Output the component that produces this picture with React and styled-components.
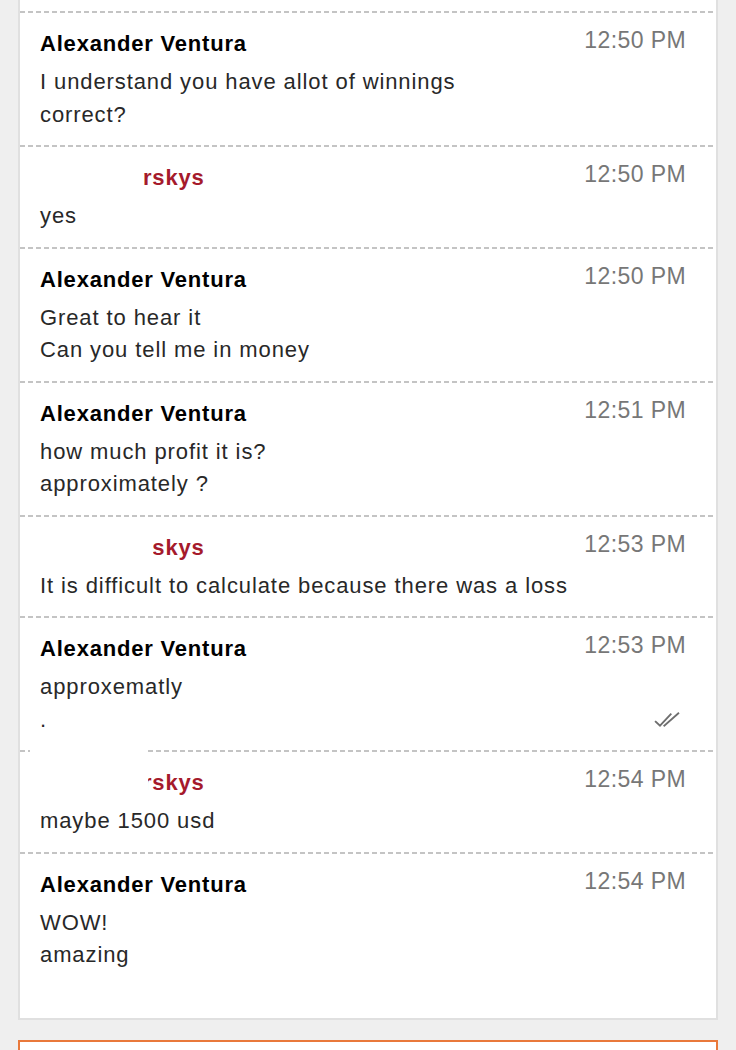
import styled, { createGlobalStyle } from "styled-components";

const GlobalStyle = createGlobalStyle`
  body {
    margin: 0;
    background: #efefef;
    font-family: "Liberation Sans", Arial, Helvetica, sans-serif;
  }
`;

const messages = [
  { from: "me", time: "12:50 PM", lines: ["I understand you have allot of winnings", "correct?"] },
  { from: "them", time: "12:50 PM", lines: ["yes"] },
  { from: "me", time: "12:50 PM", lines: ["Great to hear it", "Can you tell me in money"] },
  { from: "me", time: "12:51 PM", lines: ["how much profit it is?", "approximately ?"] },
  { from: "them", time: "12:53 PM", lines: ["It is difficult to calculate because there was a loss"], cover: "name" },
  { from: "me", time: "12:53 PM", lines: ["approxematly", "."], read: true },
  { from: "them", time: "12:54 PM", lines: ["maybe 1500 usd"], cover: "edge" },
  { from: "me", time: "12:54 PM", lines: ["WOW!", "amazing"] },
];

const Ticks = () => (
  <TickIcon width="26" height="16" viewBox="0 0 26 16" fill="none">
    <path d="M1.7 10.7 L6 14.7 L16.7 3.3" />
    <path d="M10.3 14.7 L24.3 2.3" />
  </TickIcon>
);

const App = () => {
  return (
    <>
      <GlobalStyle />
      <Panel>
        {messages.map((m, i) => (
          <Row key={i} $last={i === messages.length - 1}>
            {m.cover && <Redaction $kind={m.cover} />}
            <Head>
              {m.from === "me" ? (
                <Name>Alexander Ventura</Name>
              ) : (
                <Name $other>rskys</Name>
              )}
              <Time>{m.time}</Time>
            </Head>
            <BodyRow>
              <Body>
                {m.lines.map((l, j) => (
                  <Line key={j}>{l}</Line>
                ))}
              </Body>
              {m.read && <Ticks />}
            </BodyRow>
          </Row>
        ))}
      </Panel>
      <Composer />
    </>
  );
};

const Panel = styled.div`
  margin: 0 18px;
  padding-top: 11px;
  background: #fff;
  border: 2px solid #e0e0e0;
  border-top: none;
`;
const Row = styled.div`
  position: relative;
  padding: 17px 30px ${(p) => (p.$last ? "46px" : "14px")} 20px;
  background: repeating-linear-gradient(
      to right,
      #c4c4c4 0 5px,
      transparent 5px 8px
    )
    top left / 100% 2px no-repeat;
`;
// white boxes that hide part of the other person's name
const Redaction = styled.div`
  position: absolute;
  left: 10px;
  background: #fff;
  top: ${(p) => (p.$kind === "edge" ? "-15px" : "17px")};
  width: ${(p) => (p.$kind === "edge" ? "118px" : "123px")};
  height: ${(p) => (p.$kind === "edge" ? "70px" : "34px")};
`;
const Head = styled.div`
  display: flex;
  justify-content: space-between;
  align-items: flex-start;
`;
const Name = styled.div`
  font-size: 22px;
  line-height: 32px;
  font-weight: bold;
  letter-spacing: 0.8px;
  color: ${(p) => (p.$other ? "#a51a2c" : "#000")};
  padding-left: ${(p) => (p.$other ? "103px" : "0")};
`;
const Time = styled.div`
  font-size: 23px;
  line-height: 24px;
  letter-spacing: 0.4px;
  color: #777;
`;
const BodyRow = styled.div`
  display: flex;
  margin-top: 6px;
`;
const Body = styled.div`
  flex: 1;
  font-size: 22px;
  line-height: 32.5px;
  letter-spacing: 0.9px;
  color: #282828;
`;
const Line = styled.div``;
const TickIcon = styled.svg`
  align-self: flex-end;
  margin: 0 6px 9px 0;
  stroke: #6e6e6e;
  stroke-width: 1.8;
  stroke-linecap: square;
`;
const Composer = styled.div`
  margin: 20px 18px 0;
  height: 80px;
  background: #fff;
  border: 2px solid #e9793b;
`;

export default App;
